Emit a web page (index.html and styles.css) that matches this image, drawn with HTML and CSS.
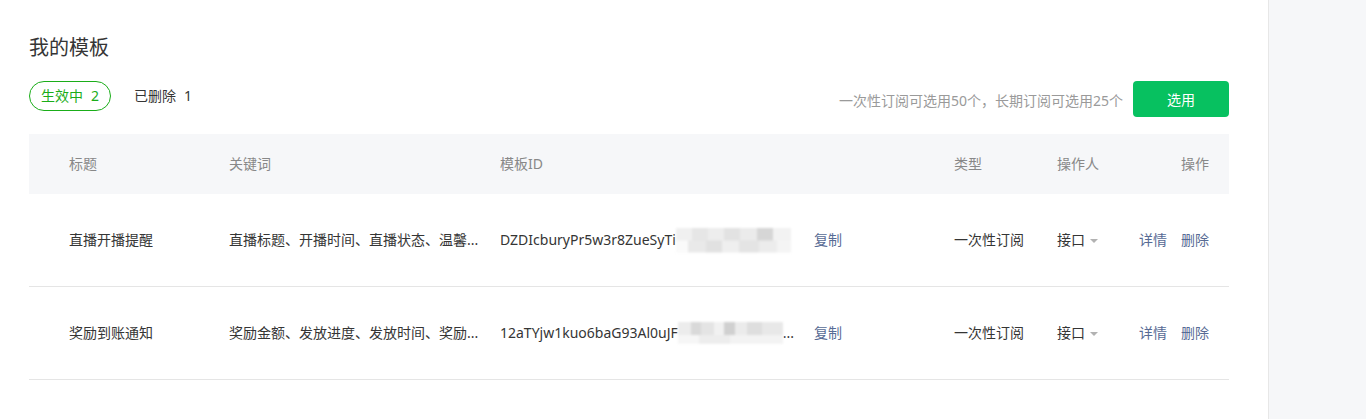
FILE: index.html
```html
<!DOCTYPE html>
<html>
<head>
    <title>我的模板</title>
    <link rel="stylesheet" href="styles.css">
</head>
<body>
    <div class="layout">
        <main class="main">
            <h2 class="page-title">我的模板</h2>

            <div class="toolbar">
                <div class="tabs">
                    <a class="tab active">生效中<span class="count">2</span></a>
                    <a class="tab">已删除<span class="count">1</span></a>
                </div>
                <div class="toolbar-right">
                    <span class="tip">一次性订阅可选用50个，长期订阅可选用25个</span>
                    <button type="button" class="btn-primary">选用</button>
                </div>
            </div>

            <table class="tpl-table">
                <colgroup>
                    <col class="col-title">
                    <col class="col-keys">
                    <col class="col-id">
                    <col class="col-type">
                    <col class="col-user">
                    <col class="col-ops">
                </colgroup>
                <thead>
                    <tr>
                        <th class="first">标题</th>
                        <th>关键词</th>
                        <th>模板ID</th>
                        <th>类型</th>
                        <th>操作人</th>
                        <th class="last">操作</th>
                    </tr>
                </thead>
                <tbody>
                    <tr>
                        <td class="first">直播开播提醒</td>
                        <td>直播标题、开播时间、直播状态、温馨...</td>
                        <td>
                            <div class="id-cell">
                                <div class="id-main">
                                    <span class="tpl-id">DZDIcburyPr5w3r8ZueSyTi</span>
                                    <span class="mosaic"></span>
                                </div>
                                <a class="link copy">复制</a>
                            </div>
                        </td>
                        <td>一次性订阅</td>
                        <td>接口<span class="caret"></span></td>
                        <td class="last"><a class="link">详情</a><a class="link">删除</a></td>
                    </tr>
                    <tr>
                        <td class="first">奖励到账通知</td>
                        <td>奖励金额、发放进度、发放时间、奖励...</td>
                        <td>
                            <div class="id-cell">
                                <div class="id-main">
                                    <span class="tpl-id">12aTYjw1kuo6baG93Al0uJF</span>
                                    <span class="mosaic short"></span>
                                    <span class="dots">...</span>
                                </div>
                                <a class="link copy">复制</a>
                            </div>
                        </td>
                        <td>一次性订阅</td>
                        <td>接口<span class="caret"></span></td>
                        <td class="last"><a class="link">详情</a><a class="link">删除</a></td>
                    </tr>
                </tbody>
            </table>
        </main>
        <aside class="side"></aside>
    </div>
</body>
</html>
```

FILE: styles.css
```css
body {
    margin: 0;
    font-family: "Noto Sans", "Noto Sans CJK SC", sans-serif;
    color: #353535;
    background-color: #fff;
}

/* page = main area + grey side column */
.layout {
    display: flex;
    height: 100vh;
}

.main {
    flex: 1;
    padding: 34px 0 0 29px;
}

.side {
    width: 97px;
    border-left: 1px solid #e7e7e7;
    background-color: #f6f7f9;
}

/* Title */
.page-title {
    margin: 0;
    font-size: 20px;
    font-weight: normal;
    line-height: 28px;
}

/* Tabs + tip + button */
.toolbar {
    width: 1200px;
    display: flex;
    justify-content: space-between;
    align-items: flex-start;
    margin-top: 19px;
}

.tabs {
    display: flex;
}

.tab {
    height: 30px;
    line-height: 28px;
    box-sizing: border-box;
    padding: 0 11px;
    margin-right: 11px;
    border: 1px solid transparent;
    border-radius: 15px;
    font-size: 14px;
    color: #353535;
    cursor: pointer;
}

.tab .count {
    margin-left: 8px;
}

.tab.active {
    border-color: #1aad19;
    color: #1aad19;
}

.toolbar-right {
    display: flex;
    align-items: center;
}

.tip {
    margin-right: 10px;
    font-size: 14px;
    line-height: 20px;
    color: #9a9a9a;
    padding-top: 3px;
}

.btn-primary {
    width: 96px;
    height: 36px;
    border: none;
    border-radius: 4px;
    background-color: #07c160;
    color: #fff;
    font-family: inherit;
    font-size: 14px;
    cursor: pointer;
}

/* Table */
.tpl-table {
    width: 1200px;
    margin-top: 17px;
    border-collapse: collapse;
    table-layout: fixed;
    font-size: 14px;
    line-height: 20px;
}

.col-title { width: 180px; }
.col-keys { width: 271px; }
.col-id { width: 454px; }
.col-type { width: 103px; }
.col-user { width: 82px; }
.col-ops { width: 110px; }

th, td {
    padding: 0 0 0 20px;
    text-align: left;
    white-space: nowrap;
}

th {
    height: 60px;
    background-color: #f6f7f9;
    color: #888;
    font-weight: normal;
}

td {
    height: 92px;
    border-bottom: 1px solid #e5e5e5;
}

th.first, td.first {
    padding-left: 40px;
}

th.last, td.last {
    text-align: right;
    padding-right: 20px;
}

/* template id with blurred part */
.id-cell {
    display: flex;
    align-items: center;
}

.id-main {
    width: 294px;
    display: flex;
    align-items: center;
}

.mosaic {
    width: 115px;
    height: 25px;
    background:
        linear-gradient(90deg, #f0f0f0 0 14%, #e6e6e6 14% 28%, #ededed 28% 42%, #e2e2e2 42% 56%, #ebebeb 56% 70%, #d6d6d6 70% 84%, #f2f2f2 84% 100%) top / 100% 50% no-repeat,
        linear-gradient(90deg, #fafafa 0 10%, #e9e9e9 10% 26%, #e1e1e1 26% 40%, #efefef 40% 55%, #e4e4e4 55% 72%, #ececec 72% 88%, #f4f4f4 88% 100%) bottom / 100% 50% no-repeat;
    filter: blur(1px);
}

.mosaic.short {
    width: 107px;
    height: 22px;
    background:
        linear-gradient(90deg, #ececec 0 12%, #d9d9d9 12% 22%, #e4e4e4 22% 34%, #f1f1f1 34% 44%, #d0d0d0 44% 54%, #ebebeb 54% 66%, #dedede 66% 80%, #e8e8e8 80% 100%) top / 100% 60% no-repeat,
        linear-gradient(90deg, #f6f6f6 0 20%, #ededed 20% 50%, #f3f3f3 50% 100%) bottom / 100% 40% no-repeat;
}

.link {
    color: #576b95;
    text-decoration: none;
    cursor: pointer;
}

.copy {
    margin-left: 20px;
}

td.last .link + .link {
    margin-left: 14px;
}

.caret {
    display: inline-block;
    margin-left: 5px;
    vertical-align: middle;
    border-left: 4px solid transparent;
    border-right: 4px solid transparent;
    border-top: 4px solid #b2b2b2;
}
```
